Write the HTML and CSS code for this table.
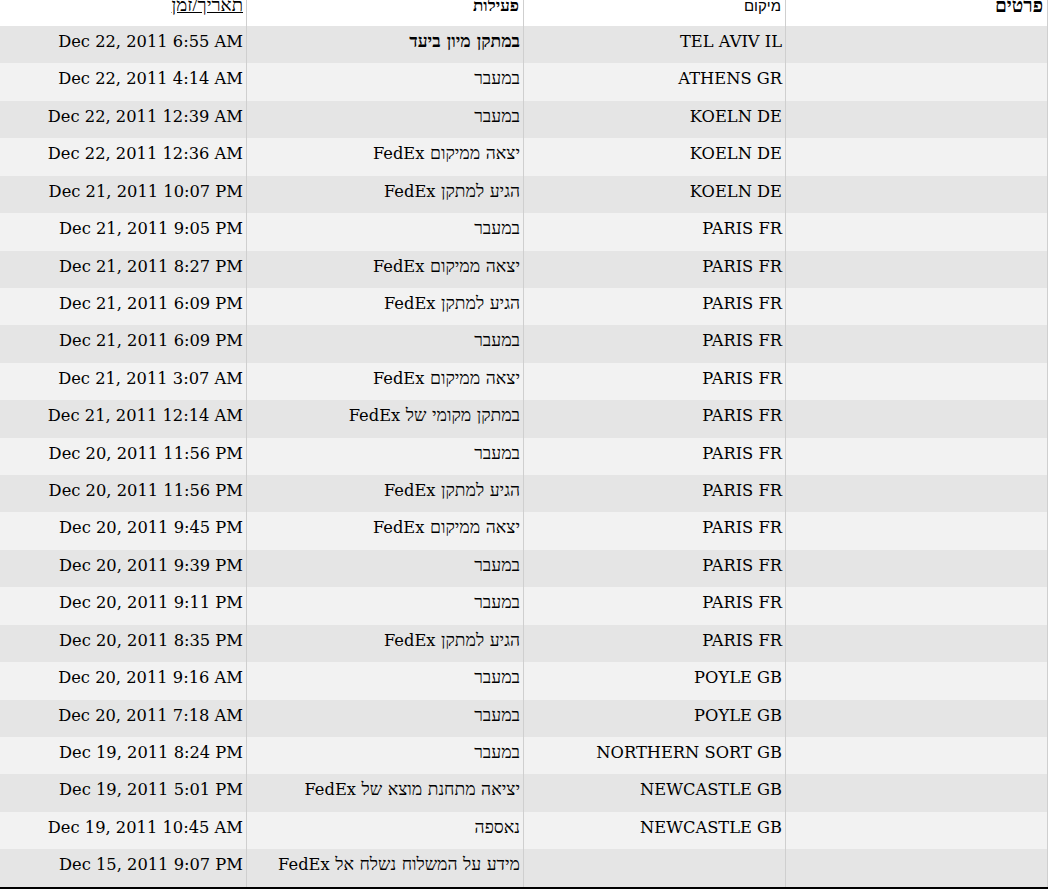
FILE: index.html
```html
<!DOCTYPE html>
<html lang="he">
<head>
<meta charset="utf-8">
<title>מעקב משלוח</title>
<link rel="stylesheet" href="styles.css">
</head>
<body>
<table class="track" dir="rtl">
  <colgroup>
    <col class="c-details">
    <col class="c-loc">
    <col class="c-act">
    <col class="c-date">
  </colgroup>
  <thead>
    <tr>
      <th class="h-details">פרטים</th>
      <th class="h-loc">מיקום</th>
      <th class="h-act">פעילות</th>
      <th class="h-date"><span class="sort">תאריך/זמן</span></th>
    </tr>
  </thead>
  <tbody>
    <tr><td></td><td>TEL AVIV IL</td><td class="act cur">במתקן מיון ביעד</td><td>Dec 22, 2011 6:55 AM</td></tr>
    <tr><td></td><td>ATHENS GR</td><td class="act">במעבר</td><td>Dec 22, 2011 4:14 AM</td></tr>
    <tr><td></td><td>KOELN DE</td><td class="act">במעבר</td><td>Dec 22, 2011 12:39 AM</td></tr>
    <tr><td></td><td>KOELN DE</td><td class="act">יצאה ממיקום <span class="en">FedEx</span></td><td>Dec 22, 2011 12:36 AM</td></tr>
    <tr><td></td><td>KOELN DE</td><td class="act">הגיע למתקן <span class="en">FedEx</span></td><td>Dec 21, 2011 10:07 PM</td></tr>
    <tr><td></td><td>PARIS FR</td><td class="act">במעבר</td><td>Dec 21, 2011 9:05 PM</td></tr>
    <tr><td></td><td>PARIS FR</td><td class="act">יצאה ממיקום <span class="en">FedEx</span></td><td>Dec 21, 2011 8:27 PM</td></tr>
    <tr><td></td><td>PARIS FR</td><td class="act">הגיע למתקן <span class="en">FedEx</span></td><td>Dec 21, 2011 6:09 PM</td></tr>
    <tr><td></td><td>PARIS FR</td><td class="act">במעבר</td><td>Dec 21, 2011 6:09 PM</td></tr>
    <tr><td></td><td>PARIS FR</td><td class="act">יצאה ממיקום <span class="en">FedEx</span></td><td>Dec 21, 2011 3:07 AM</td></tr>
    <tr><td></td><td>PARIS FR</td><td class="act">במתקן מקומי של <span class="en">FedEx</span></td><td>Dec 21, 2011 12:14 AM</td></tr>
    <tr><td></td><td>PARIS FR</td><td class="act">במעבר</td><td>Dec 20, 2011 11:56 PM</td></tr>
    <tr><td></td><td>PARIS FR</td><td class="act">הגיע למתקן <span class="en">FedEx</span></td><td>Dec 20, 2011 11:56 PM</td></tr>
    <tr><td></td><td>PARIS FR</td><td class="act">יצאה ממיקום <span class="en">FedEx</span></td><td>Dec 20, 2011 9:45 PM</td></tr>
    <tr><td></td><td>PARIS FR</td><td class="act">במעבר</td><td>Dec 20, 2011 9:39 PM</td></tr>
    <tr><td></td><td>PARIS FR</td><td class="act">במעבר</td><td>Dec 20, 2011 9:11 PM</td></tr>
    <tr><td></td><td>PARIS FR</td><td class="act">הגיע למתקן <span class="en">FedEx</span></td><td>Dec 20, 2011 8:35 PM</td></tr>
    <tr><td></td><td>POYLE GB</td><td class="act">במעבר</td><td>Dec 20, 2011 9:16 AM</td></tr>
    <tr><td></td><td>POYLE GB</td><td class="act">במעבר</td><td>Dec 20, 2011 7:18 AM</td></tr>
    <tr><td></td><td>NORTHERN SORT GB</td><td class="act">במעבר</td><td>Dec 19, 2011 8:24 PM</td></tr>
    <tr><td></td><td>NEWCASTLE GB</td><td class="act">יציאה מתחנת מוצא של <span class="en">FedEx</span></td><td>Dec 19, 2011 5:01 PM</td></tr>
    <tr><td></td><td>NEWCASTLE GB</td><td class="act">נאספה</td><td>Dec 19, 2011 10:45 AM</td></tr>
    <tr><td></td><td></td><td class="act">מידע על המשלוח נשלח אל <span class="en">FedEx</span></td><td>Dec 15, 2011 9:07 PM</td></tr>
  </tbody>
</table>
</body>
</html>
```

FILE: styles.css
```css
html, body {
  margin: 0;
  padding: 0;
  background: #ffffff;
}

.track {
  width: 1048px;
  table-layout: fixed;
  border-collapse: separate;
  border-spacing: 0;
  border-bottom: 2px solid #000;
  font-family: "DejaVu Serif", "Liberation Serif", serif;
  font-size: 16.3px;
  color: #000;
}

.c-details { width: 262px; }
.c-loc { width: 262px; }
.c-act { width: 277px; }
.c-date { width: 247px; }

.track th,
.track td {
  border-right: 1px solid #cfcfcf;
  text-align: right;
  white-space: nowrap;
  overflow: visible;
}

.track th {
  font-family: "Liberation Serif", serif;
  font-weight: normal;
  font-size: 18px;
  line-height: 11px;
  height: 11px;
  padding: 0 4px 15px 3px;
  vertical-align: top;
  background: #fff;
}

.track .h-details { font-weight: bold; font-size: 19px; }
.track .h-act { font-weight: bold; font-size: 17px; }
.track .h-loc { font-family: "Liberation Sans", sans-serif; font-size: 15px; }
.track .h-date { padding-right: 3px; font-size: 18.5px; }

.sort {
  text-decoration: underline;
}

.track td {
  line-height: 19px;
  height: 19px;
  padding: 6px 3px 12.43px 3px;
  vertical-align: top;
}

.track td.act {
  font-size: 17.5px;
}

.track td.act .en {
  font-size: 16.3px;
}

.track tbody tr:nth-child(odd) td { background: #e5e5e5; }
.track tbody tr:nth-child(even) td { background: #f2f2f2; }

.track td.cur { font-weight: bold; }
```
